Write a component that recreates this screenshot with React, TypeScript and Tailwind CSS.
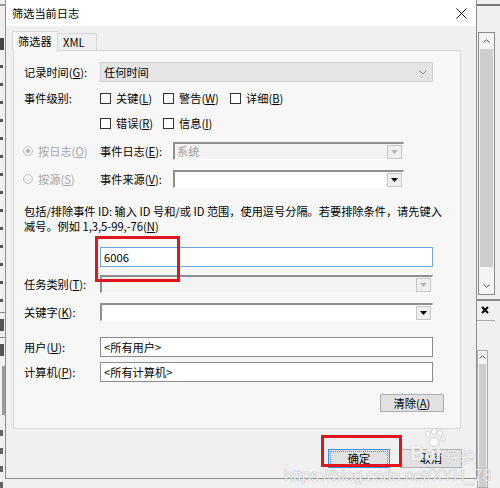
import React from "react";

const U = ({ k }: { k: string }) => (
  <>
    (<span className="underline">{k}</span>)
  </>
);

function Check({ label, k, w }: { label: string; k: string; w: string }) {
  return (
    <div className={`flex items-center ${w}`}>
      <span className="w-[11px] h-[11px] border border-[#333] bg-white shrink-0" />
      <span className="ml-[5px] whitespace-nowrap">
        {label}
        <U k={k} />
      </span>
    </div>
  );
}

function Arrow({ disabled }: { disabled?: boolean }) {
  return (
    <div className="w-[15px] h-[14px] my-auto mr-[1px] border border-[#c6c6c6] bg-[#f0f0f0] flex items-center justify-center shrink-0">
      <svg width="7" height="4" viewBox="0 0 7 4">
        <path d="M0 0h7L3.5 4z" fill={disabled ? "#b4b4b4" : "#000"} />
      </svg>
    </div>
  );
}

function Combo({ disabled, text, w }: { disabled?: boolean; text?: string; w: string }) {
  return (
    <div
      className={`flex h-[18px] ${w} border-t-2 border-l-2 border-t-[#8f8f8f] border-l-[#8f8f8f] border-b border-r border-b-white border-r-[#f8f8f8] ${
        disabled ? "bg-[#f3f3f3]" : "bg-white"
      }`}
    >
      <div className="flex-1 pl-[2px] leading-[15px] text-[#a0a0a0]">{text}</div>
      <Arrow disabled={disabled} />
    </div>
  );
}

function TextInput({ value, blue }: { value: string; blue?: boolean }) {
  return (
    <div
      className={`w-[333px] h-[20px] bg-white border flex items-center pl-[3px] ${
        blue ? "border-[#6fa6dc]" : "border-[#8c8c8c]"
      }`}
    >
      {value}
    </div>
  );
}

function Row({ label, children, cls }: { label: React.ReactNode; children: React.ReactNode; cls: string }) {
  return (
    <div className={`flex items-center ${cls}`}>
      <div className="w-[76px] whitespace-nowrap">{label}</div>
      {children}
    </div>
  );
}

function Radio({ checked, label }: { checked?: boolean; label: React.ReactNode }) {
  return (
    <div className="flex items-center w-[77px] -ml-[1px] text-[#a6a6a6]">
      <span className="w-[10px] h-[10px] rounded-full border border-[#c4c4c4] bg-[#f4f4f4] flex items-center justify-center shrink-0">
        {checked && <span className="w-[4px] h-[4px] rounded-full bg-[#b0b0b0]" />}
      </span>
      <span className="ml-[5px] whitespace-nowrap">{label}</span>
    </div>
  );
}

function LeftStrip() {
  const ticks = Array.from({ length: 14 });
  return (
    <div className="w-[5px] flex flex-col items-start">
      <div className="mt-[4px] h-[2px] w-[5px] bg-[#9a9a9a]" />
      <div className="mt-[32px] h-[12px] w-[4px] bg-[#444]" />
      {ticks.map((_, i) => (
        <div key={i} className="mt-[15px] h-[3px] w-[3px] bg-[#555]" />
      ))}
      <div className="mt-[10px] h-[1px] w-[5px] bg-[#888]" />
      <div className="mt-[6px] h-[12px] w-[4px] bg-[#555]" />
      <div className="mt-[6px] h-[1px] w-[5px] bg-[#888]" />
      <div className="mt-[6px] h-[12px] w-[4px] bg-[#555]" />
      <div className="mt-[10px] ml-[2px] h-[50px] w-[3px] bg-[#9a9a9a]" />
      <div className="mt-[15px] h-[6px] w-[3px] bg-[#666]" />
      <div className="mt-[12px] h-[6px] w-[3px] bg-[#666]" />
      <div className="mt-[12px] h-[6px] w-[3px] bg-[#666]" />
      <div className="mt-[10px] h-[6px] w-[3px] bg-[#666]" />
    </div>
  );
}

function RightStrip() {
  return (
    <div className="w-[23px] flex flex-col">
      <div className="mt-[4px] h-[2px] w-full bg-[#777]" />
      <div className="mt-[26px] ml-[1px] w-[17px] h-[266px] border border-[#8a8a8a] bg-[#f4f4f4] flex flex-col">
        <div className="h-[16px] flex items-center justify-center">
          <svg width="7" height="4" viewBox="0 0 7 4">
            <path d="M0.5 3.5L3.5 0.8L6.5 3.5" stroke="#555" fill="none" />
          </svg>
        </div>
        <div className="mx-[1px] h-[218px] bg-[#cdcdcd]" />
        <div className="flex-1" />
        <div className="h-[16px] flex items-center justify-center">
          <svg width="7" height="4" viewBox="0 0 7 4">
            <path d="M0.5 0.5L3.5 3.2L6.5 0.5" stroke="#555" fill="none" />
          </svg>
        </div>
      </div>
      <div className="mt-[4px] h-[2px] w-full bg-[#888]" />
      <div className="mt-[4px] ml-[4px] h-[10px] flex items-center">
        <svg width="8" height="8" viewBox="0 0 8 8">
          <path d="M1 1L7 7M7 1L1 7" stroke="#000" strokeWidth="2" />
        </svg>
      </div>
      <div className="mt-[5px] h-[1px] w-[18px] bg-[#aaa]" />
      <div className="mt-[29px] w-[11px] h-[140px] border border-[#aaa] bg-[#f4f4f4] flex flex-col">
        <div className="h-[13px] flex items-center justify-center">
          <svg width="7" height="4" viewBox="0 0 7 4">
            <path d="M0.5 3.5L3.5 0.8L6.5 3.5" stroke="#555" fill="none" />
          </svg>
        </div>
        <div className="mx-[1px] flex-1 bg-[#cdcdcd]" />
      </div>
    </div>
  );
}

export default function App() {
  return (
    <div className="relative w-[500px] h-[488px] overflow-hidden bg-[#f0f0f0] font-['Noto_Sans_CJK_SC','Noto_Sans',sans-serif] text-[11.2px] text-black">
      <div className="flex h-full">
        <LeftStrip />
        <div className="flex-1" />
        <RightStrip />
      </div>

      {/* Dialog */}
      <div className="absolute left-[5px] top-0 w-[472px] h-[479px] bg-[#f0f0f0] border-l border-r border-b border-[#8f8f8f] flex flex-col">
        <div className="h-[26px] bg-white flex items-center justify-between pl-[6px] pr-[9px]">
          <span>筛选当前日志</span>
          <svg width="11" height="11" viewBox="0 0 11 11">
            <path d="M0.5 0.5L10.5 10.5M10.5 0.5L0.5 10.5" stroke="#111" strokeWidth="1" />
          </svg>
        </div>

        {/* Tabs */}
        <div className="pl-[6px] pt-[5px] flex items-end">
          <div className="relative z-10 -mb-px h-[20px] w-[46px] border border-b-0 border-[#d6d6d6] bg-[#f7f7f7] flex items-center pl-[5px]">
            筛选器
          </div>
          <div className="h-[17px] w-[39px] border border-l-0 border-b-0 border-[#d6d6d6] bg-[#f0f0f0] flex items-center pl-[5px]">
            XML
          </div>
        </div>

        {/* Panel */}
        <div className="ml-[7px] w-[448px] h-[379px] border border-[#d6d6d6] bg-[#f7f7f7] pl-[10px] flex flex-col">
          <Row
            cls="mt-[11px]"
            label={
              <>
                记录时间<U k="G" />:
              </>
            }
          >
            <div className="w-[333px] h-[20px] bg-[#e5e5e5] border border-[#cfcfcf] flex items-center justify-between pl-[3px] pr-[5px]">
              <span>任何时间</span>
              <svg width="8" height="5" viewBox="0 0 8 5">
                <path d="M0.5 0.5L4 4L7.5 0.5" stroke="#888" fill="none" />
              </svg>
            </div>
          </Row>

          <Row cls="mt-[9px] h-[14px]" label="事件级别:">
            <Check label="关键" k="L" w="w-[63px]" />
            <Check label="警告" k="W" w="w-[67px]" />
            <Check label="详细" k="B" w="w-[80px]" />
          </Row>

          <Row cls="mt-[11px] h-[14px]" label="">
            <Check label="错误" k="R" w="w-[63px]" />
            <Check label="信息" k="I" w="w-[67px]" />
          </Row>

          <div className="mt-[12px] flex items-center">
            <Radio
              checked
              label={
                <>
                  按日志<U k="O" />
                </>
              }
            />
            <div className="w-[73px] whitespace-nowrap">
              事件日志<U k="E" />:
            </div>
            <Combo disabled text="系统" w="w-[231px]" />
          </div>

          <div className="mt-[10px] flex items-center">
            <Radio
              label={
                <>
                  按源<U k="S" />
                </>
              }
            />
            <div className="w-[73px] whitespace-nowrap">
              事件来源<U k="V" />:
            </div>
            <Combo w="w-[231px]" />
          </div>

          <div className="mt-[16px] flex flex-col whitespace-nowrap">
            <div className="h-[15px] leading-[15px]">包括/排除事件 ID: 输入 ID 号和/或 ID 范围，使用逗号分隔。若要排除条件，请先键入</div>
            <div className="h-[15px] leading-[15px]">
              减号。例如 1,3,5-99,-76<U k="N" />
            </div>
          </div>

          <div className="mt-[13px] flex">
            <div className="w-[76px]" />
            <TextInput value="6006" blue />
          </div>

          <Row
            cls="mt-[8px]"
            label={
              <>
                任务类别<U k="T" />:
              </>
            }
          >
            <Combo disabled w="w-[333px]" />
          </Row>

          <Row
            cls="mt-[10px]"
            label={
              <>
                关键字<U k="K" />:
              </>
            }
          >
            <Combo w="w-[333px]" />
          </Row>

          <Row
            cls="mt-[16px]"
            label={
              <>
                用户<U k="U" />:
              </>
            }
          >
            <TextInput value="<所有用户>" />
          </Row>

          <Row
            cls="mt-[5px]"
            label={
              <>
                计算机<U k="P" />:
              </>
            }
          >
            <TextInput value="<所有计算机>" />
          </Row>

          <div className="mt-[12px] flex justify-end pr-[16px]">
            <div className="w-[64px] h-[18px] bg-[#e1e1e1] border border-[#adadad] flex items-center justify-center">
              清除<U k="A" />
            </div>
          </div>
        </div>

        {/* Buttons */}
        <div className="mt-[20px] flex justify-end gap-[10px] pr-[14px]">
          <div className="w-[62px] h-[19px] bg-[#e1e1e1] border border-[#3d8ee0] outline outline-1 outline-offset-[-3px] outline-dotted outline-[#3d8ee0] flex items-center justify-center">
            确定
          </div>
          <div className="w-[62px] h-[19px] bg-[#e1e1e1] border border-[#adadad] flex items-center justify-center">
            取消
          </div>
        </div>
      </div>

      {/* Annotations */}
      <div className="absolute left-[95px] top-[236px] w-[85px] h-[46px] border-[3px] border-[#e0161f]" />
      <div className="absolute left-[321px] top-[435px] w-[81px] h-[32px] border-[3px] border-[#e0161f]" />

      {/* Watermark */}
      <svg className="absolute left-[422px] top-[428px]" width="26" height="20" viewBox="0 0 26 20">
        <g fill="#ffffff" fillOpacity="0.85" stroke="#b8b8b8" strokeWidth="0.6">
          <ellipse cx="6" cy="6" rx="2.5" ry="3.2" />
          <ellipse cx="12" cy="3.5" rx="2.5" ry="3.2" />
          <ellipse cx="18" cy="5" rx="2.5" ry="3.2" />
          <ellipse cx="21" cy="11" rx="2.2" ry="2.8" />
          <ellipse cx="12" cy="14" rx="5" ry="4.5" />
        </g>
      </svg>
      <div className="absolute left-[410px] top-[443px] flex items-end text-white/85 text-[20px] font-['Liberation_Sans',sans-serif] font-bold [text-shadow:0_0_1px_#9a9a9a] leading-none">
        Bai
        <span className="ml-[4px] text-[15px] font-normal font-['Noto_Sans_CJK_SC',sans-serif]">经验</span>
      </div>
      <div className="absolute left-[284px] top-[468px] text-white/85 text-[16px] font-['Liberation_Sans',sans-serif] [text-shadow:0_0_1px_#8a8a8a] leading-none whitespace-nowrap">
        https://blog.csdn.net/XYH_78
      </div>
    </div>
  );
}
